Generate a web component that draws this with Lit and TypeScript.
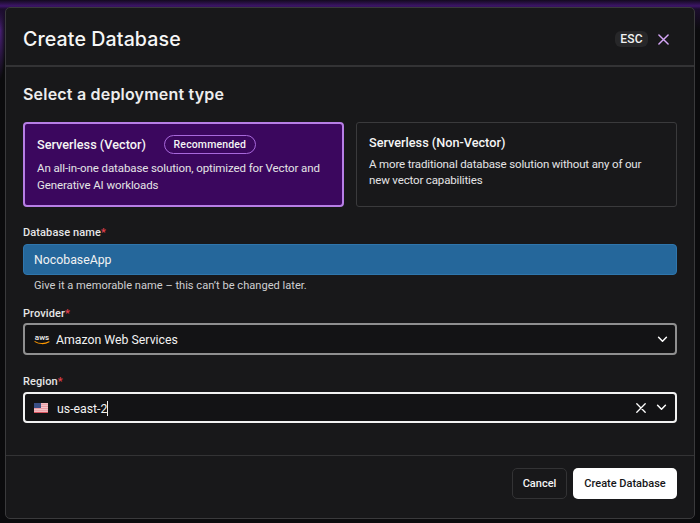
import { LitElement, html, css } from "lit";
import { customElement } from "lit/decorators.js";

const chevron = html`<svg class="chev" viewBox="0 0 12 8" width="11" height="7"><path d="M1.5 1.5 6 6l4.5-4.5" fill="none" stroke="#fff" stroke-width="1.7" stroke-linecap="round" stroke-linejoin="round"/></svg>`;

@customElement("app-root")
export class AppRoot extends LitElement {
  static styles = css`
    :host {
      display: block;
      width: 700px;
      height: 523px;
      box-sizing: border-box;
      padding: 7px 5px 4px 5px;
      overflow: hidden;
      background:
        linear-gradient(180deg, #130a1e 0px, #3d1568 6px, #1c0d2e 9px, rgba(10,10,12,0) 30px),
        radial-gradient(ellipse 6px 50px at 0px 30px, #4a2078, transparent),
        #0b0b0d;
      font-family: Roboto, "Liberation Sans", sans-serif;
      color: #fff;
    }
    .dialog {
      box-sizing: border-box;
      height: 100%;
      background: #18181a;
      border: 1px solid #3a3a3c;
      border-radius: 5px;
      display: flex;
      flex-direction: column;
    }
    .head {
      height: 59px;
      flex: none;
      box-sizing: border-box;
      border-bottom: 2px solid #333335;
      padding: 5px 25px 0 17px;
      display: flex;
      align-items: center;
      justify-content: space-between;
    }
    h1 {
      margin: 0;
      font-family: Inter, sans-serif;
      font-weight: 500;
      font-size: 19.6px;
      letter-spacing: 0.1px;
      color: #f6f6f6;
    }
    .head-right { display: flex; align-items: center; gap: 10px; }
    .esc {
      background: #272729;
      border-radius: 6px;
      width: 33px;
      height: 16px;
      font-size: 12px;
      font-weight: 500;
      letter-spacing: 0.2px;
      line-height: 16px;
      text-align: center;
      color: #f2f2f2;
    }
    .close { display: block; }
    .body {
      flex: 1;
      padding: 17px 17px 0 17px;
      display: flex;
      flex-direction: column;
      min-height: 0;
    }
    h2 {
      margin: 0;
      font-family: Inter, sans-serif;
      font-size: 16px;
      line-height: 20px;
      font-weight: 600;
      color: #ededed;
      letter-spacing: 0.2px;
    }
    .cards {
      display: grid;
      grid-template-columns: 321px 321px;
      gap: 12px;
      margin-top: 18px;
    }
    .card {
      box-sizing: border-box;
      height: 85px;
      border: 1px solid #3a3a3c;
      border-radius: 3px;
      padding: 10px 12px;
    }
    .card.on {
      background: #3b075e;
      border: 2px solid #b77ee6;
      border-radius: 4px;
      padding: 11px 12px;
    }
    .card-title {
      display: flex;
      align-items: center;
      gap: 18px;
      height: 19px;
      font-size: 12.7px;
      font-weight: 500;
      color: #f5f5f5;
    }
    .pill {
      box-sizing: border-box;
      height: 19px;
      width: 92px;
      border: 1px solid #a868dc;
      border-radius: 10px;
      font-size: 10.5px;
      line-height: 17px;
      text-align: center;
      letter-spacing: 0.15px;
      font-weight: 500;
    }
    .card p {
      margin: 4px 0 0;
      font-size: 11.5px;
      line-height: 16px;
      letter-spacing: -0.15px;
      color: #e4e4e6;
    }
    .card.on p { margin-top: 6px; line-height: 17px; letter-spacing: -0.1px; }
    .field label {
      display: block;
      font-size: 11px;
      font-weight: 500;
      line-height: 16px;
      color: #e6e6e6;
      letter-spacing: 0.1px;
    }
    .field label i { color: #e5404d; font-style: normal; }
    .f1 { margin-top: 18px; }
    .f2 { margin-top: 13px; }
    .f3 { margin-top: 19px; }
    .input {
      box-sizing: border-box;
      border-radius: 4px;
      display: flex;
      align-items: center;
      font-size: 12.3px;
      color: #f2f2f2;
    }
    .name {
      margin-top: 3px;
      height: 31px;
      padding: 0 10px;
      background: #25679b;
      border: 1px solid #2f76ad;
    }
    .provider {
      margin-top: 1px;
      height: 32px;
      border: 2px solid #8f8f90;
      padding: 0 7px 0 9px;
      gap: 6px;
      background: #131315;
    }
    .region {
      margin-top: 2px;
      height: 31px;
      border: 2px solid #f2f2f2;
      padding: 0 8px 0 9px;
      gap: 9px;
      background: #131315;
    }
    .grow { flex: 1; padding-top: 1px; }
    .caret { display: inline-block; width: 1px; height: 15px; background: #eee; vertical-align: -3px; }
    .help {
      margin: 3px 0 0 11px;
      font-size: 11.1px;
      line-height: 15px;
      color: #cfcfd1;
    }
    .x { margin-right: 1px; display: block; }
    .foot {
      flex: none;
      box-sizing: border-box;
      height: 63px;
      border-top: 1px solid #333335;
      padding: 12px 17px 0 0;
      display: flex;
      justify-content: flex-end;
      gap: 6px;
      align-items: flex-start;
    }
    button {
      font-family: Roboto, sans-serif;
      font-size: 11px;
      font-weight: 500;
      height: 31px;
      border-radius: 5px;
      padding: 0;
    }
    .cancel { width: 55px; background: #18181a; color: #f4f4f4; border: 1px solid #333335; }
    .create { width: 104px; background: #fff; color: #161618; border: none; }
    .flag { display: block; flex: none; }
  `;

  render() {
    return html`<div class="dialog">
      <div class="head">
        <h1>Create Database</h1>
        <div class="head-right">
          <span class="esc">ESC</span>
          <svg class="close" viewBox="0 0 12 12" width="11" height="11"><path d="M1 1l10 10M11 1 1 11" stroke="#d5a6f7" stroke-width="1.6" stroke-linecap="round"/></svg>
        </div>
      </div>
      <div class="body">
        <h2>Select a deployment type</h2>
        <div class="cards">
          <div class="card on">
            <div class="card-title"><span>Serverless (Vector)</span><span class="pill">Recommended</span></div>
            <p>An all-in-one database solution, optimized for Vector and<br />Generative AI workloads</p>
          </div>
          <div class="card">
            <div class="card-title"><span>Serverless (Non-Vector)</span></div>
            <p>A more traditional database solution without any of our<br />new vector capabilities</p>
          </div>
        </div>
        <div class="field f1">
          <label>Database name<i>*</i></label>
          <div class="input name">NocobaseApp</div>
          <div class="help">Give it a memorable name – this can’t be changed later.</div>
        </div>
        <div class="field f2">
          <label>Provider<i>*</i></label>
          <div class="input provider">
            <svg class="flag" viewBox="0 0 16 12" width="16" height="12">
              <text x="8" y="7" text-anchor="middle" font-family="Roboto, sans-serif" font-size="8" font-weight="500" fill="#eee">aws</text>
              <path d="M1 8.6c4 2.6 10 2.6 14 .2" fill="none" stroke="#f90" stroke-width="1.1" stroke-linecap="round"/>
            </svg>
            <span class="grow">Amazon Web Services</span>
            ${chevron}
          </div>
        </div>
        <div class="field f3">
          <label>Region<i>*</i></label>
          <div class="input region">
            <svg class="flag" viewBox="0 0 14 10" width="14" height="10">
              <rect width="14" height="10" fill="#f4c9cc"/>
              <path d="M0 1.2h14M0 3.4h14M0 5.6h14M0 7.8h14" stroke="#e88f98" stroke-width=".9"/>
              <path d="M0 9.5h14" stroke="#d9545f" stroke-width="1"/>
              <rect width="7" height="5" fill="#3a4f86"/>
            </svg>
            <span class="grow">us-east-2<span class="caret"></span></span>
            <svg class="x" viewBox="0 0 10 10" width="10" height="10"><path d="M.8.8l8.4 8.4M9.2.8.8 9.2" stroke="#fff" stroke-width="1.3" stroke-linecap="round"/></svg>
            ${chevron}
          </div>
        </div>
      </div>
      <div class="foot">
        <button class="cancel">Cancel</button>
        <button class="create">Create Database</button>
      </div>
    </div>`;
  }
}
